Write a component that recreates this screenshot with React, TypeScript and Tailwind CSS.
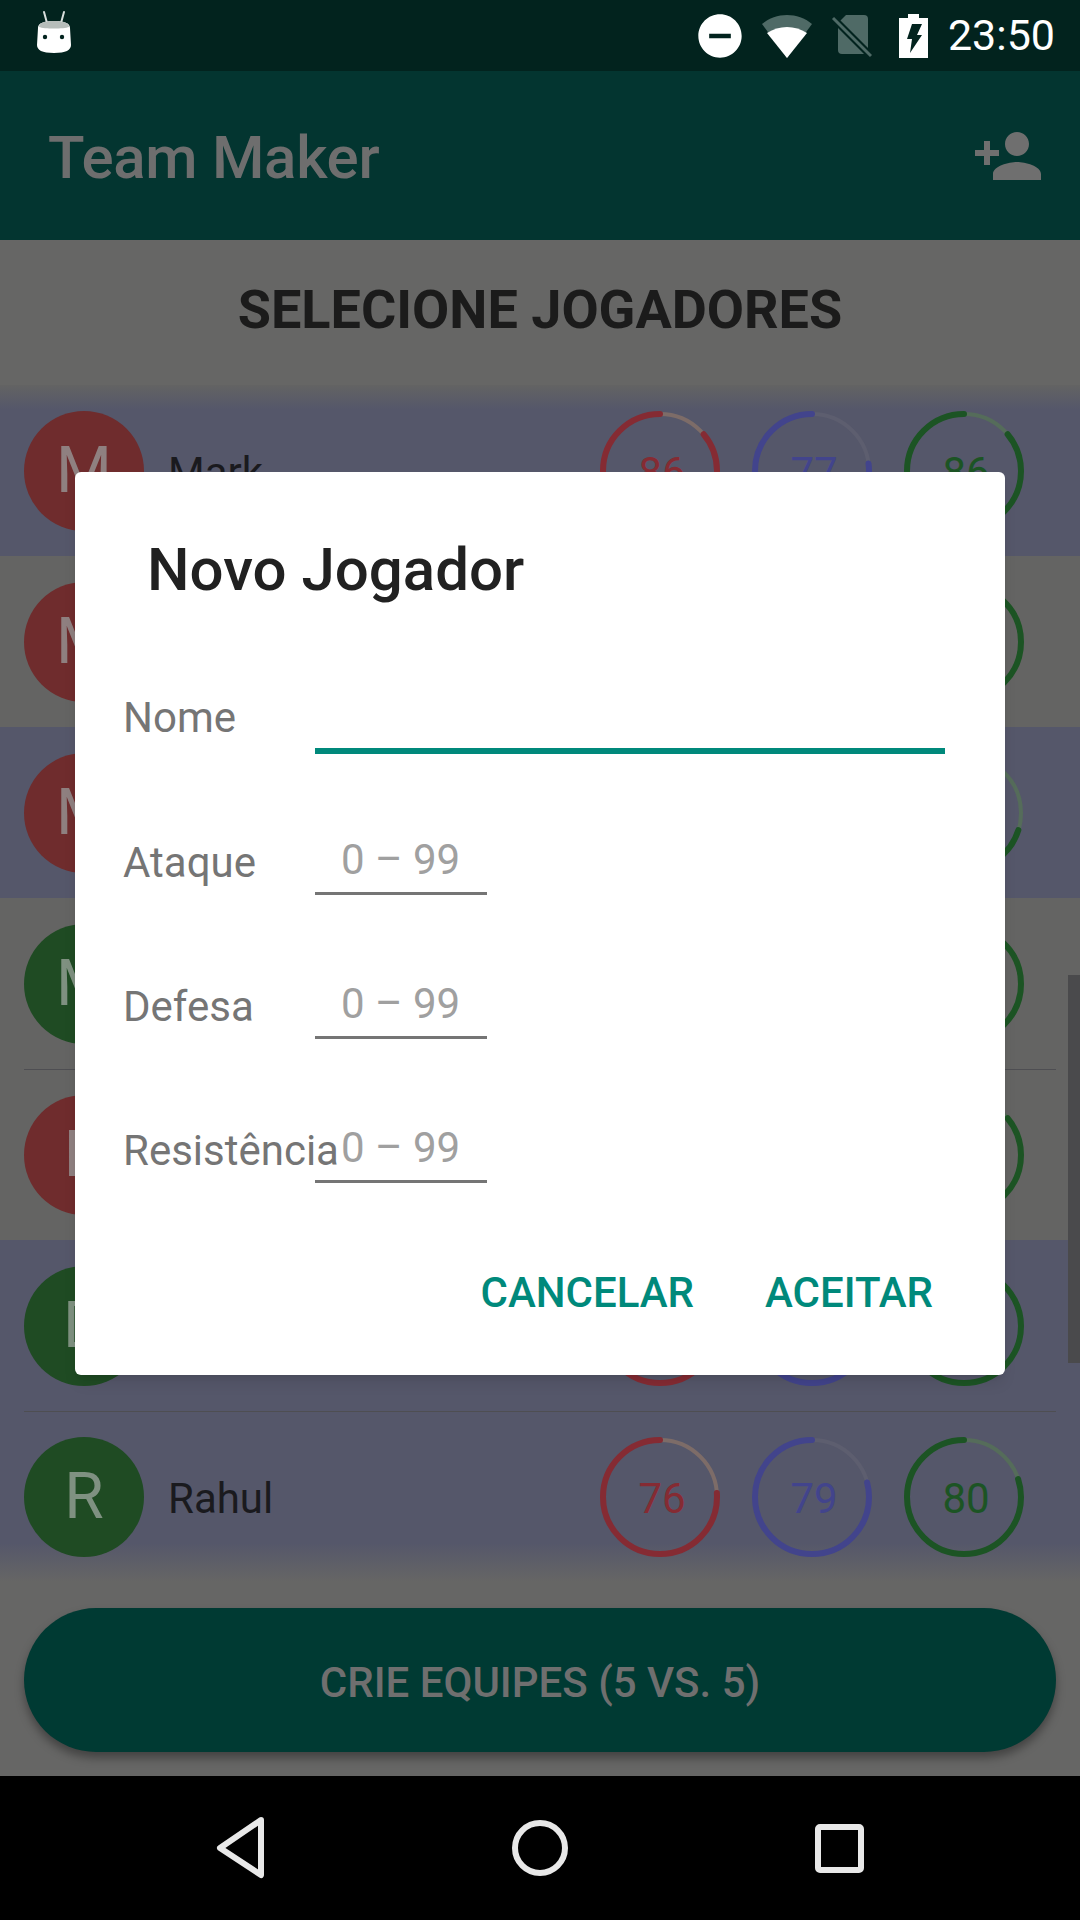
import React from 'react';
import { MdPersonAdd, MdDoNotDisturbOn } from 'react-icons/md';

type Tone = 'red' | 'green';
type Player = { name?: string; initial: string; tone: Tone; stats: number[]; showStats?: boolean; bg: string; divider?: boolean };

const GRAY = 'bg-[#646463]';
const BLUE = 'bg-[#55576a]';

// rows 2-6 sit behind the dialog, only the avatar edge and the last ring show
const players: Player[] = [
  { name: 'Mark', initial: 'M', tone: 'red', stats: [86, 77, 86], showStats: true, bg: 'bg-[linear-gradient(#636363_0px,#55576a_24px)]' },
  { initial: 'M', tone: 'red', stats: [82, 80, 88], bg: GRAY },
  { initial: 'M', tone: 'red', stats: [78, 74, 70], bg: BLUE },
  { initial: 'M', tone: 'green', stats: [80, 82, 88], bg: GRAY },
  { initial: 'P', tone: 'red', stats: [84, 78, 86], bg: GRAY, divider: true },
  { initial: 'D', tone: 'green', stats: [81, 76, 90], bg: BLUE },
  { name: 'Rahul', initial: 'R', tone: 'green', stats: [76, 79, 80], showStats: true, bg: 'bg-[linear-gradient(#55576a_132px,#666665_171px)]', divider: true },
];

const ringColors = [
  { arc: '#852b33', track: '#7d6c68', text: 'text-[#852b33]' },
  { arc: '#42448c', track: '#5d5e6f', text: 'text-[#42448c]' },
  { arc: '#1c5424', track: '#556c5a', text: 'text-[#1c5424]' },
];

function Ring({ value, kind, showValue }: { value: number; kind: number; showValue?: boolean }) {
  const c = ringColors[kind];
  const r = 57;
  const len = 2 * Math.PI * r;
  return (
    <div className="relative w-[120px] h-[120px] flex items-center justify-center">
      <svg width="120" height="120" className="absolute inset-0">
        <circle cx="60" cy="60" r={r} fill="none" stroke={c.track} strokeWidth="4" />
        <circle
          transform="translate(60 60) rotate(-90) scale(1 -1)"
          r={r}
          fill="none"
          stroke={c.arc}
          strokeWidth="6"
          strokeLinecap="round"
          strokeDasharray={`${(len * value) / 100} ${len}`}
        />
      </svg>
      {showValue && <span className={`pl-[4px] pt-[4px] text-[42px] leading-none ${c.text}`}>{value}</span>}
    </div>
  );
}

function PlayerRow({ p }: { p: Player }) {
  return (
    <div className={`relative h-[171px] flex items-center pl-6 pr-[56px] ${p.bg}`}>
      {p.divider && <div className="absolute top-0 left-6 right-6 h-px bg-[#4e4e52]" />}
      <div className={`w-[120px] h-[120px] rounded-full flex items-center justify-center text-[64px] ${p.tone === 'red' ? 'bg-[#6f2c2d] text-[#8f8080]' : 'bg-[#1f4b23] text-[#7f9181]'}`}>
        {p.initial}
      </div>
      {p.name && <span className="ml-6 pt-[3px] text-[42px] text-[#1a1a1e]">{p.name}</span>}
      <div className="ml-auto flex gap-8">
        {p.stats.map((v, i) => (
          <Ring key={i} value={v} kind={i} showValue={p.showStats} />
        ))}
      </div>
    </div>
  );
}

function Field({ label, full }: { label: string; full?: boolean }) {
  return (
    <div className="flex h-[144px] items-end pl-12">
      <span className={`w-[192px] shrink-0 whitespace-nowrap text-[42px] leading-[50px] text-[#757575] ${full ? 'mb-[11px]' : 'mb-[7px]'}`}>{label}</span>
      {full ? (
        <div className="w-[630px] h-[6px] bg-[#00897b]" />
      ) : (
        <div className="w-[172px] h-[60px] border-b-[3px] border-[#757575] pl-[26px] text-[42px] leading-[50px] text-[#a0a0a0]">0 – 99</div>
      )}
    </div>
  );
}

export default function App() {
  return (
    <div className="relative w-[1080px] h-[1920px] overflow-hidden bg-[#666665]" style={{ fontFamily: 'Roboto, sans-serif' }}>
      {/* status bar */}
      <div className="h-[71px] bg-[#02231e] flex items-center pr-[25px] text-white">
        <svg width="36" height="44" viewBox="0 0 36 44" className="ml-9 mt-[-8px]">
          <path d="M8 2 L11 13 M28 2 L25 13" stroke="#d8dedc" strokeWidth="2" strokeLinecap="round" />
          <path d="M2 18 C2 13 8 11 18 11 C28 11 34 13 34 18 L35 35 C35 40 30 43 18 43 C6 43 1 40 1 35 Z" fill="#fff" />
          <path d="M3 17 C3 13 8 11 18 11 C28 11 33 13 33 17 C28 19 8 19 3 17 Z" fill="#b6bdba" />
          <circle cx="9" cy="27" r="2.2" fill="#02231e" />
          <circle cx="26" cy="27" r="2.2" fill="#02231e" />
        </svg>
        <div className="ml-auto flex items-center">
          <MdDoNotDisturbOn size={52} color="#fff" />
          <svg width="54" height="46" viewBox="0 0 54 46" className="ml-[14px]">
            <path d="M27 45 L2 11 C9 5 18 2 27 2 C36 2 45 5 52 11 Z" fill="#4f6a66" />
            <path d="M27 45 L7 20 C13 16 20 14 27 14 C34 14 41 16 47 20 Z" fill="#fff" />
          </svg>
          <svg width="42" height="46" viewBox="0 0 42 46" className="ml-[16px]">
            <path d="M16 2 H34 Q38 2 38 6 V38 Q38 41 34 41 H12 Q8 41 8 37 V10 Z" fill="#4f6a66" />
            <path d="M3 5 L41 43" stroke="#02231e" strokeWidth="7" />
            <path d="M3 5 L41 43" stroke="#4f6a66" strokeWidth="3" />
          </svg>
          <svg width="29" height="44" viewBox="0 0 29 44" className="ml-[27px]">
            <path d="M9 0 H20 V4 H29 V44 H0 V4 H9 Z" fill="#fff" />
            <path d="M13 10 H23 L18 21 H23 L11 39 L13 25 H8 Z" fill="#02231e" />
          </svg>
          <span className="ml-5 text-[43px] leading-none">23:50</span>
        </div>
      </div>

      {/* app bar */}
      <div className="h-[169px] bg-[#033530] flex items-center justify-between pl-12 pr-9">
        <span className="pt-[5px] text-[60px] tracking-[-0.3px] font-medium text-[#6e6e6e]">Team Maker</span>
        <MdPersonAdd size={72} color="#6f6f6f" />
      </div>

      {/* content */}
      <div className="h-[145px] flex items-center justify-center pb-[6px] text-[54px] font-bold text-[#1b1b1b]">SELECIONE JOGADORES</div>
      <div>
        {players.map((p, i) => (
          <PlayerRow key={i} p={p} />
        ))}
      </div>
      <div className="mt-[26px] mx-6 h-[144px] rounded-[72px] bg-[#003a33] flex items-center justify-center pt-[4px] shadow-[0_6px_10px_rgba(0,0,0,0.35)] text-[42px] font-medium text-[#6f6f6f]">
        CRIE EQUIPES (5 VS. 5)
      </div>

      {/* nav bar */}
      <div className="absolute bottom-0 left-0 right-0 h-[144px] bg-black">
        <svg width="1080" height="144">
          <path d="M261 47 L220 75 L261 102 Z" transform="translate(0 -3)" fill="none" stroke="#e8e8e8" strokeWidth="6" strokeLinejoin="round" />
          <circle cx="540" cy="72" r="25" fill="none" stroke="#e8e8e8" strokeWidth="6" />
          <rect x="818" y="51" width="43" height="43" rx="2" fill="none" stroke="#e8e8e8" strokeWidth="6" />
        </svg>
      </div>

      {/* scrollbar */}
      <div className="absolute right-0 top-[975px] w-3 h-[388px] bg-[#4a4a4c]" />

      {/* dialog */}
      <div className="absolute left-[75px] top-[472px] w-[930px] h-[903px] bg-white rounded-[6px] shadow-lg">
        <div className="h-[133px] pl-[72px] flex items-end text-[60px] leading-[70px] font-medium text-[#212121]">Novo Jogador</div>
        <div className="mt-[5px]">
          <Field label="Nome" full />
          <div className="-mt-[3px]" />
          <Field label="Ataque" />
          <Field label="Defesa" />
          <Field label="Resistência" />
        </div>
        <div className="mt-[85px] flex justify-end gap-[71px] pr-[72px] text-[42px] leading-[50px] font-medium text-[#00897b]">
          <span>CANCELAR</span>
          <span>ACEITAR</span>
        </div>
      </div>
    </div>
  );
}
